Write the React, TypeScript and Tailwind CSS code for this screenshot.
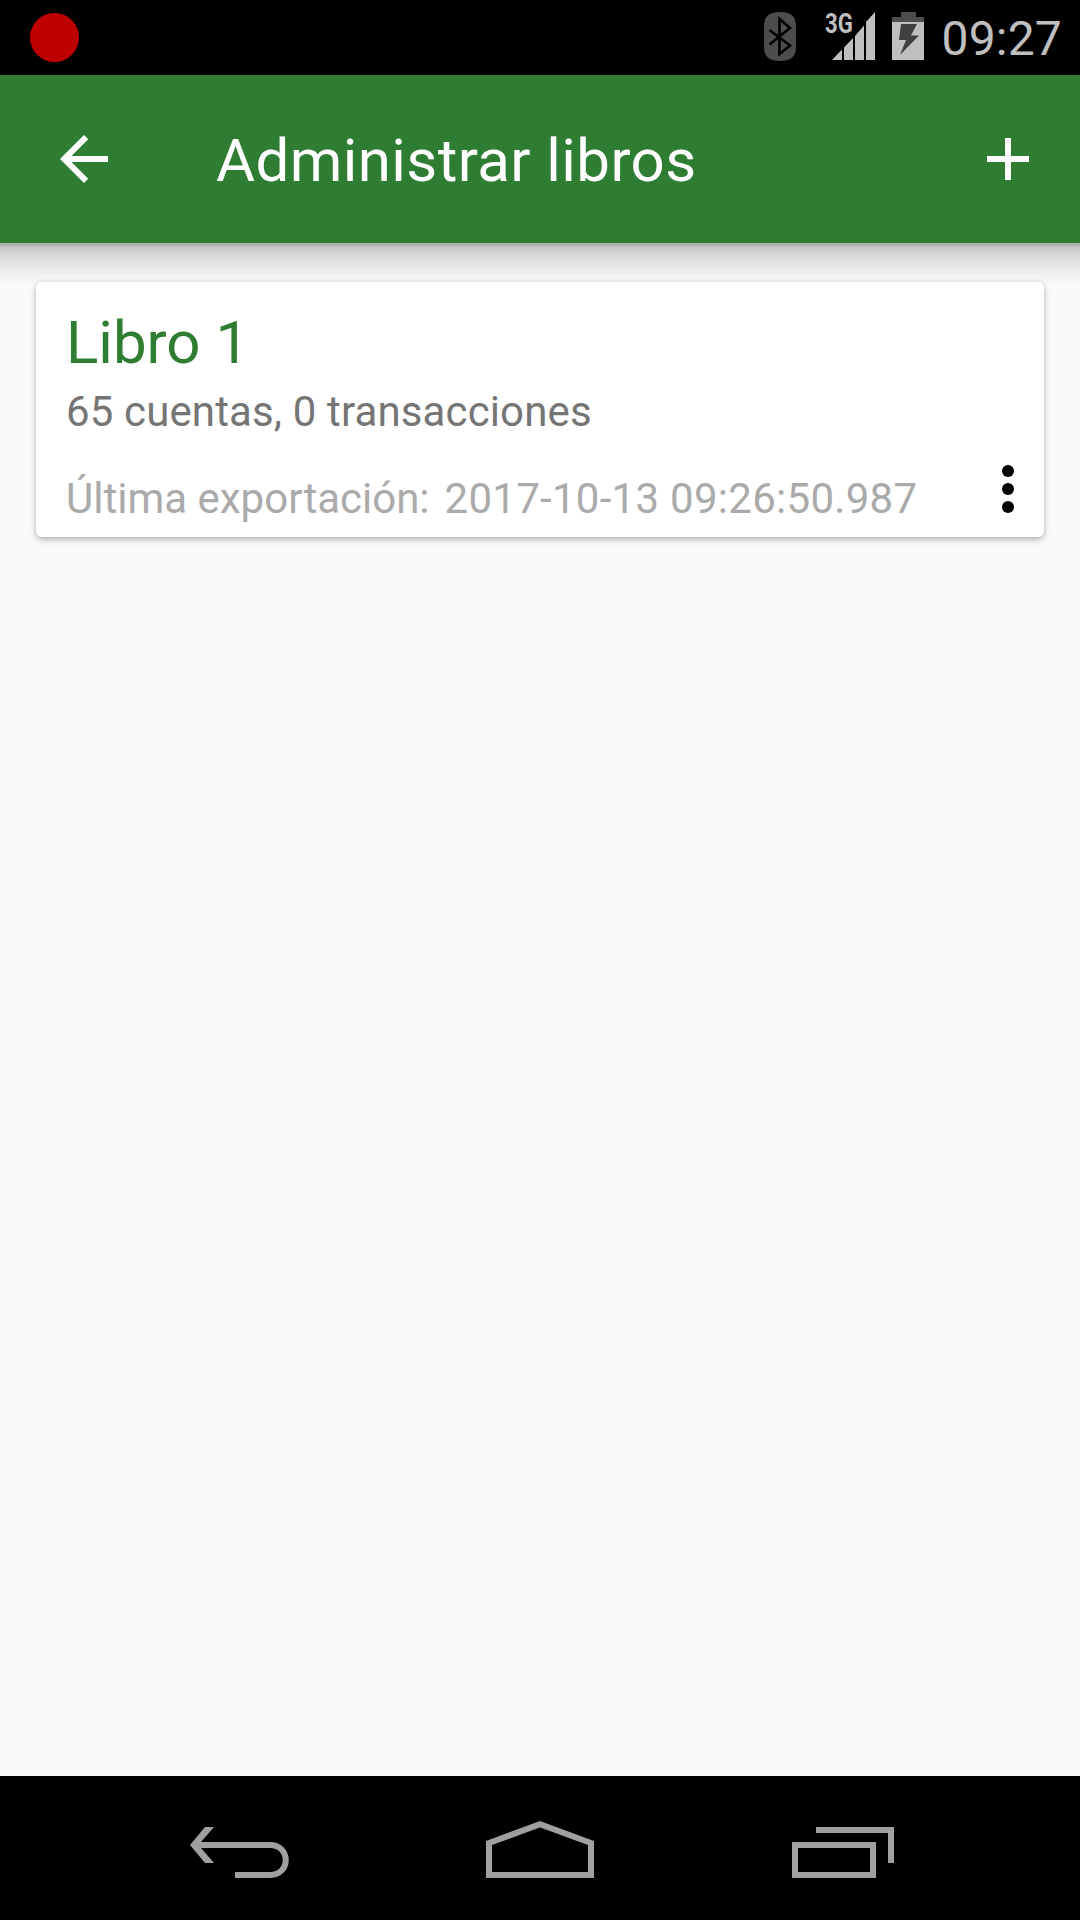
import React from "react";

function StatusBar() {
  return (
    <header className="flex h-[75px] items-center justify-between bg-black pl-[29.5px] pr-[18px]">
      <div className="size-[49px] rounded-full bg-[#bf0000]" />
      <div className="flex h-full items-start">
        <svg className="mr-[28px] mt-3 h-[50px] w-[33px]" viewBox="0 0 33 50" fill="none">
          <path d="M16.500 0C28 0 32 5 32 15V34C32 44 28 49 16 49C4 49 0 44 0 34V15C0 5 4 0 16.500 0Z" fill="#4d4d4d" />
          <path d="M5.500 18L26 33.500L15.500 42V7L26 16L5.500 32.500" stroke="#000" strokeWidth="2.700" />
        </svg>
        <div className="relative mr-[17px] mt-3 h-[50px] w-[50px]">
          <svg className="size-full" viewBox="0 0 50 50" fill="#bfbfbf">
            <path d="M7 48L17 37.500V48ZM19 35.500L28 26V48H19ZM30 24L39 13.500V48H30ZM41 10L50 0V48H41Z" />
          </svg>
          <span className="absolute left-0 -top-px origin-left scale-x-[0.82] text-[27px] font-bold leading-[27px] text-[#bfbfbf]">3G</span>
        </div>
        <svg className="mr-[17px] mt-3 h-[50px] w-[32px]" viewBox="0 0 32 50">
          <path d="M9 0H24V5H32V10H0V5H9Z" fill="#4d4d4d" />
          <path d="M0 10H32V48H0Z" fill="#bfbfbf" />
          <path d="M9 12H25L19 23.500H27L8 43L14 28H7Z" fill="#404040" />
        </svg>
        <time className="pt-[11px] text-[48px] leading-[56px] tracking-[0.2px] text-[#bfbfbf]">09:27</time>
      </div>
    </header>
  );
}

function AppBar() {
  return (
    <div className="flex h-[168px] items-center bg-[#2e7d32] pl-12 pr-9 text-white">
      <button aria-label="Atrás">
        <svg className="size-[72px]" viewBox="0 0 24 24" fill="currentColor">
          <path d="M20 11H7.830l5.590-5.590L12 4l-8 8 8 8 1.410-1.410L7.830 13H20v-2z" />
        </svg>
      </button>
      <h1 className="ml-24 flex-1 pt-[3px] text-[60px] leading-[70px] tracking-[0.4px]">Administrar libros</h1>
      <button aria-label="Añadir libro">
        <svg className="size-[72px]" viewBox="0 0 24 24" fill="currentColor">
          <path d="M19 13h-6v6h-2v-6H5v-2h6V5h2v6h6v2z" />
        </svg>
      </button>
    </div>
  );
}

function BookCard() {
  return (
    <article className="mx-9 flex items-end justify-between rounded-[6px] bg-white pb-[14px] pl-[30px] pt-[26px] shadow-[0_3px_6px_rgba(0,0,0,0.24),0_0_5px_rgba(0,0,0,0.1)]">
      <div className="whitespace-nowrap">
        <h2 className="text-[60px] leading-[70px] text-[#2e7d32]">Libro 1</h2>
        <p className="mt-[9px] text-[42px] leading-[49px] tracking-[0.13px] text-[#757575]">65 cuentas, 0 transacciones</p>
        <p className="mt-[38px] flex gap-[15px] text-[42px] leading-[49px] text-[#aaaaaa]">
          <span>Última exportación:</span>
          <span className="tracking-[0.28px]">2017-10-13 09:26:50.987</span>
        </p>
      </div>
      <button className="-mb-[2px]" aria-label="Más opciones">
        <svg className="size-[72px]" viewBox="0 0 24 24" fill="#000">
          <circle cx="12" cy="6" r="2" />
          <circle cx="12" cy="12" r="2" />
          <circle cx="12" cy="18" r="2" />
        </svg>
      </button>
    </article>
  );
}

function NavBar() {
  return (
    <nav className="flex h-36 items-center bg-black pl-[180px] pr-[176px]">
      <svg className="h-[60px] w-[120px]" viewBox="0 0 120 60" fill="none" stroke="#a0a0a0" strokeWidth="6">
        <path d="M15 27H90C111 27 111 57 90 57H55" />
        <path d="M25 9H34L21 24V30L34 45H25L10 27Z" fill="#a0a0a0" stroke="none" />
      </svg>
      <svg className="ml-[180px] h-[60px] w-[120px]" viewBox="0 0 120 60" fill="none" stroke="#a0a0a0" strokeWidth="6">
        <path d="M9 57V25L60 6.300L111 25V57Z" />
      </svg>
      <svg className="ml-[180px] h-[60px] w-[120px]" viewBox="0 0 120 60" fill="none" stroke="#a0a0a0" strokeWidth="6">
        <path d="M15 27H93V57H15ZM36 12H111V45" />
      </svg>
    </nav>
  );
}

export default function App() {
  return (
    <div className="flex h-[1920px] w-[1080px] flex-col overflow-hidden bg-[#fafafa] font-['Roboto',sans-serif]">
      <StatusBar />
      <AppBar />
      <div className="h-[3px] bg-[#b0b0b0]" />
      <main className="flex-1 bg-[linear-gradient(to_bottom,#c3c3c3_0px,#d8d8d8_10px,#e8e8e8_21px,#f5f5f5_32px,#fafafa_40px)] pt-9">
        <BookCard />
      </main>
      <NavBar />
    </div>
  );
}
